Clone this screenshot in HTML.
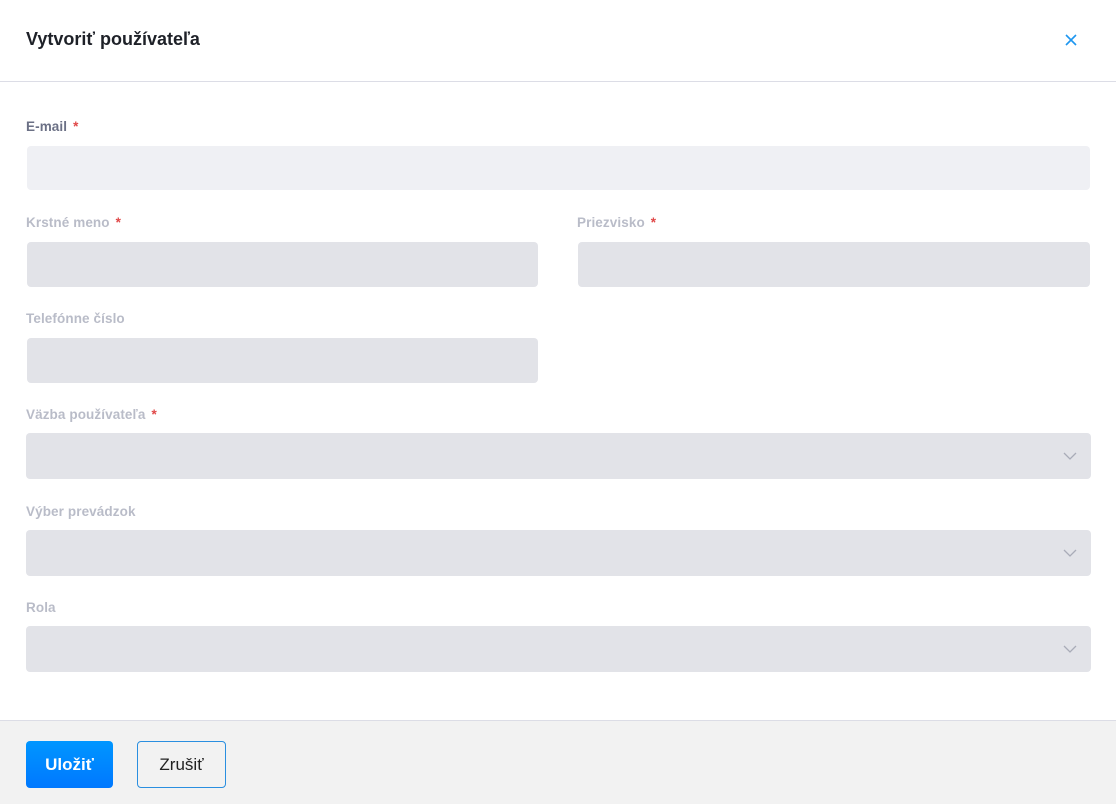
<!DOCTYPE html>
<html><head><meta charset="utf-8"><style>
*{box-sizing:border-box;margin:0;padding:0}
body{width:1116px;height:804px;background:#fff;font-family:"Liberation Sans",sans-serif;position:relative;overflow:hidden}
.a{position:absolute}
h1{position:absolute;left:26px;top:29px;font-size:18px;font-weight:bold;color:#1e2128}
.hdr{position:absolute;left:0;top:81px;width:1116px;height:1px;background:#dcdde6}
.lbl{position:absolute;left:26px;font-size:13.5px;font-weight:bold;color:#b9bcc8;letter-spacing:0.1px}
.lbl .s{color:#e04848;margin-left:6px}
.f{position:absolute;background:#e2e3e8;border-radius:4px}
.chev{position:absolute;right:14px;top:50%;margin-top:-5px}
.foot{position:absolute;left:0;top:720px;width:1116px;height:84px;background:#f2f2f2;border-top:1px solid #dcdde6}
.btn{position:absolute;top:741px;height:47px;border-radius:4px;font-size:17px;display:flex;align-items:center;justify-content:center}
</style></head><body>
<h1>Vytvoriť používateľa</h1>
<svg class="a" style="left:1065px;top:34px" width="12" height="12" viewBox="0 0 12 12"><path d="M1 1L11 11M11 1L1 11" stroke="#1e96f0" stroke-width="1.6"/></svg>
<div class="hdr"></div>

<div class="lbl" style="top:119px;color:#6b7085">E-mail<span class="s">*</span></div>
<div class="f" style="left:27px;top:146px;width:1063px;height:44px;background:#eff0f4"></div>

<div class="lbl" style="top:215px">Krstné meno<span class="s">*</span></div>
<div class="f" style="left:27px;top:242px;width:511px;height:45px"></div>
<div class="lbl" style="top:215px;left:577px">Priezvisko<span class="s">*</span></div>
<div class="f" style="left:578px;top:242px;width:512px;height:45px"></div>

<div class="lbl" style="top:311px">Telefónne číslo</div>
<div class="f" style="left:27px;top:338px;width:511px;height:45px"></div>

<div class="lbl" style="top:407px">Väzba používateľa<span class="s">*</span></div>
<div class="f" style="left:26px;top:433px;width:1065px;height:46px"><svg class="chev" width="14" height="10" viewBox="0 0 14 10"><path d="M1 2L7 8L13 2" stroke="#a9acb8" stroke-width="1.3" fill="none"/></svg></div>

<div class="lbl" style="top:504px">Výber prevádzok</div>
<div class="f" style="left:26px;top:530px;width:1065px;height:46px"><svg class="chev" width="14" height="10" viewBox="0 0 14 10"><path d="M1 2L7 8L13 2" stroke="#a9acb8" stroke-width="1.3" fill="none"/></svg></div>

<div class="lbl" style="top:600px">Rola</div>
<div class="f" style="left:26px;top:626px;width:1065px;height:46px"><svg class="chev" width="14" height="10" viewBox="0 0 14 10"><path d="M1 2L7 8L13 2" stroke="#a9acb8" stroke-width="1.3" fill="none"/></svg></div>

<div class="foot"></div>
<div class="btn" style="left:26px;width:87px;background:linear-gradient(#0096ff,#0078ff);color:#fff;font-weight:bold">Uložiť</div>
<div class="btn" style="left:137px;width:89px;border:1px solid #2a8fe0;color:#222;background:#f2f2f2">Zrušiť</div>
</body></html>
